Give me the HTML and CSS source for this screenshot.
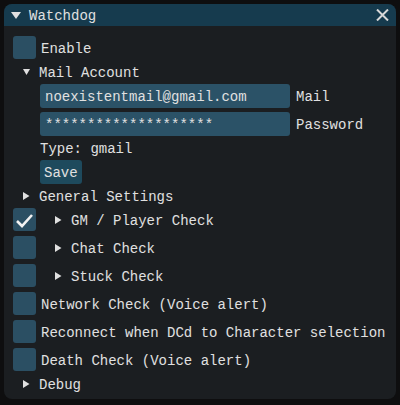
FILE: index.html
```html
<!DOCTYPE html>
<html>
<head>
<meta charset="utf-8">
<link rel="stylesheet" href="styles.css">
</head>
<body>
<div class="window">
  <div class="titlebar">
    <svg class="title-arrow" width="10" height="7" viewBox="0 0 10 7"><polygon points="0,0 10,0 5,7" fill="#e0e0e0"/></svg>
    <span class="title">Watchdog</span>
    <svg class="close" width="13" height="12" viewBox="0 0 13 12"><path d="M1 0.5 L12 11.5 M12 0.5 L1 11.5" stroke="#d8d8d8" stroke-width="2"/></svg>
  </div>
  <div class="content">
    <div class="row frame"><span class="cb"></span><span class="txt label">Enable</span></div>
    <div class="row text tree"><svg class="arrow-down" width="7" height="6" viewBox="0 0 7 6"><polygon points="0,0 7,0 3.5,6" fill="#e0e0e0"/></svg><span class="txt">Mail Account</span></div>
    <div class="row frame indent"><span class="input">noexistentmail@gmail.com</span><span class="txt side">Mail</span></div>
    <div class="row frame indent"><span class="input">********************</span><span class="txt side">Password</span></div>
    <div class="row text indent"><span class="txt">Type: gmail</span></div>
    <div class="row frame indent"><span class="button">Save</span></div>
    <div class="row text tree"><svg class="arrow-right" width="7" height="8" viewBox="0 0 7 8"><polygon points="0,0 6.5,4 0,8" fill="#e0e0e0"/></svg><span class="txt">General Settings</span></div>
    <div class="row frame"><span class="cb checked"><svg width="23" height="23" viewBox="0 0 23 23"><polyline points="4,13 9,18 19,7" fill="none" stroke="#f2f2f2" stroke-width="2.6"/></svg></span><svg class="arrow-sub" width="7" height="8" viewBox="0 0 7 8"><polygon points="0,0 6.5,4 0,8" fill="#e0e0e0"/></svg><span class="txt">GM / Player Check</span></div>
    <div class="row frame"><span class="cb"></span><svg class="arrow-sub" width="7" height="8" viewBox="0 0 7 8"><polygon points="0,0 6.5,4 0,8" fill="#e0e0e0"/></svg><span class="txt">Chat Check</span></div>
    <div class="row frame"><span class="cb"></span><svg class="arrow-sub" width="7" height="8" viewBox="0 0 7 8"><polygon points="0,0 6.5,4 0,8" fill="#e0e0e0"/></svg><span class="txt">Stuck Check</span></div>
    <div class="row frame"><span class="cb"></span><span class="txt label">Network Check (Voice alert)</span></div>
    <div class="row frame"><span class="cb"></span><span class="txt label">Reconnect when DCd to Character selection</span></div>
    <div class="row frame"><span class="cb"></span><span class="txt label">Death Check (Voice alert)</span></div>
    <div class="row text tree"><svg class="arrow-right" width="7" height="8" viewBox="0 0 7 8"><polygon points="0,0 6.5,4 0,8" fill="#e0e0e0"/></svg><span class="txt">Debug</span></div>
  </div>
</div>
</body>
</html>
```
FILE: styles.css
```css
html, body {
  margin: 0;
  padding: 0;
  background: #0e0e0f;
}
body {
  font-family: "Liberation Mono", "DejaVu Sans Mono", monospace;
  font-size: 14px;
  color: #e0e0e0;
  width: 400px;
  height: 405px;
  overflow: hidden;
}
.window {
  margin: 4px 0 0 4px;
  width: 392px;
  height: 395px;
  border-radius: 8px;
  background: #1b1e21;
  overflow: hidden;
}
.titlebar {
  height: 22px;
  background: #163b4e;
  display: flex;
  align-items: center;
  padding: 0 7px;
}
.title-arrow {
  margin-right: 8px;
}
.title {
  line-height: 16px;
  padding-top: 2px;
}
.close {
  margin-left: auto;
  margin-top: -1px;
}
.content {
  padding: 10px 9px 0 9px;
  display: flex;
  flex-direction: column;
  gap: 4px;
}
.row {
  display: flex;
  align-items: center;
  white-space: nowrap;
  line-height: 16px;
}
.row.frame {
  height: 24px;
}
.row.text {
  height: 16px;
}
.txt {
  padding-top: 2px;
}
.indent {
  padding-left: 27px;
}
.tree {
  padding-left: 10px;
}
.tree svg {
  margin-right: 9px;
}
.cb {
  width: 23px;
  height: 23px;
  border-radius: 3px;
  background: #2b4f63;
  align-self: flex-start;
  flex: none;
  display: block;
}
.cb svg {
  display: block;
}
.label {
  margin-left: 5px;
}
.arrow-sub {
  margin-left: 19px;
  margin-right: 9px;
}
.input {
  box-sizing: border-box;
  width: 250px;
  height: 24px;
  padding: 2px 0 0 5px;
  border-radius: 3px;
  background: #2b5267;
  display: flex;
  align-items: center;
}
.side {
  margin-left: 6px;
}
.button {
  box-sizing: border-box;
  height: 24px;
  padding: 2px 4px 0 4px;
  border-radius: 3px;
  background: #1e4a5d;
  display: flex;
  align-items: center;
}
```
